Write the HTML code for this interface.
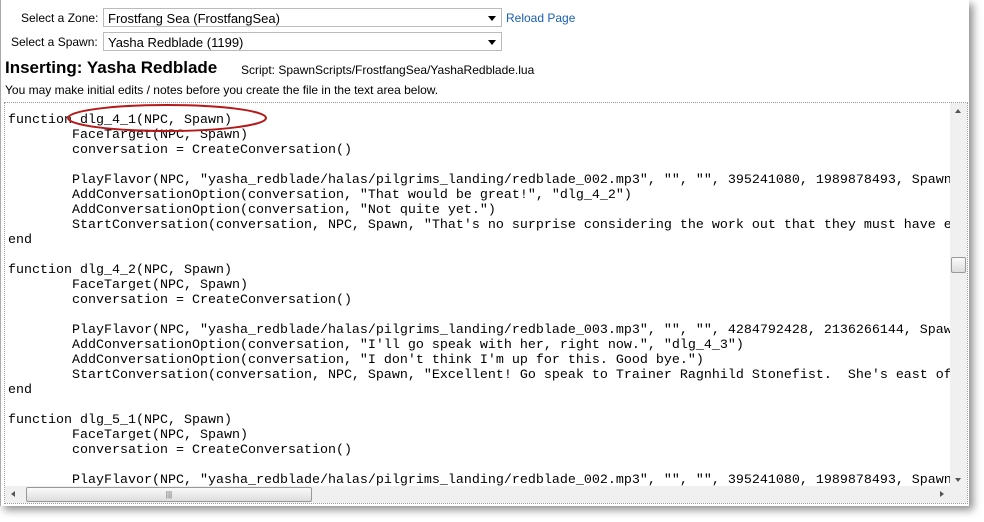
<!DOCTYPE html>
<html><head><meta charset="utf-8"><style>
body{margin:0;width:984px;height:522px;background:#fff;position:relative;overflow:hidden;font-family:"Liberation Sans",sans-serif;}
#page{position:absolute;left:0;top:0;width:968px;height:506px;background:#fff;border-left:1px solid #aaa;box-shadow:4px 4px 8px rgba(0,0,0,.45);}
.lbl{position:absolute;font-size:12px;color:#000;}
.sel{position:absolute;height:19px;border:1px solid #bbb;background:#fff;font-size:13px;line-height:19px;padding-left:4px;box-sizing:border-box;}
.sel:after{content:"";position:absolute;right:5px;top:7px;border-left:4px solid transparent;border-right:4px solid transparent;border-top:5px solid #000;}
#ta{position:absolute;left:3px;top:102px;width:964px;height:402px;border:1px dotted #999;box-sizing:border-box;overflow:hidden;}
pre{margin:0;position:absolute;left:3px;top:10px;font-family:"Liberation Mono",monospace;font-size:13.33px;line-height:15px;color:#000;tab-size:8;white-space:pre;}
.vs{position:absolute;right:0;top:0;width:17px;height:384px;background:#f0f0f0;}
.hs{position:absolute;left:0;bottom:0;height:17px;width:945px;background:#f0f0f0;}
.corner{position:absolute;right:0;bottom:0;width:17px;height:17px;background:#f0f0f0;}
</style></head><body>
<div id="page">
<div class="lbl" style="left:20px;top:11px">Select a Zone:</div>
<div class="sel" style="left:102px;top:8px;width:399px">Frostfang Sea (FrostfangSea)</div>
<div class="lbl" style="left:505px;top:11px;color:#1a5fb4">Reload Page</div>
<div class="lbl" style="left:10px;top:35px">Select a Spawn:</div>
<div class="sel" style="left:102px;top:32px;width:399px">Yasha Redblade (1199)</div>
<div style="position:absolute;left:4px;top:58px;font-size:17px;font-weight:bold">Inserting: Yasha Redblade</div>
<div class="lbl" style="left:240px;top:63px">Script: SpawnScripts/FrostfangSea/YashaRedblade.lua</div>
<div class="lbl" style="left:4px;top:83px">You may make initial edits / notes before you create the file in the text area below.</div>
<div id="ta">
<pre>function dlg_4_1(NPC, Spawn)
	FaceTarget(NPC, Spawn)
	conversation = CreateConversation()

	PlayFlavor(NPC, "yasha_redblade/halas/pilgrims_landing/redblade_002.mp3", "", "", 395241080, 1989878493, Spawn)
	AddConversationOption(conversation, "That would be great!", "dlg_4_2")
	AddConversationOption(conversation, "Not quite yet.")
	StartConversation(conversation, NPC, Spawn, "That's no surprise considering the work out that they must have e
end

function dlg_4_2(NPC, Spawn)
	FaceTarget(NPC, Spawn)
	conversation = CreateConversation()

	PlayFlavor(NPC, "yasha_redblade/halas/pilgrims_landing/redblade_003.mp3", "", "", 4284792428, 2136266144, Spawn)
	AddConversationOption(conversation, "I'll go speak with her, right now.", "dlg_4_3")
	AddConversationOption(conversation, "I don't think I'm up for this. Good bye.")
	StartConversation(conversation, NPC, Spawn, "Excellent! Go speak to Trainer Ragnhild Stonefist.  She's east of
end

function dlg_5_1(NPC, Spawn)
	FaceTarget(NPC, Spawn)
	conversation = CreateConversation()

	PlayFlavor(NPC, "yasha_redblade/halas/pilgrims_landing/redblade_002.mp3", "", "", 395241080, 1989878493, Spawn)</pre>
<div class="vs">
 <div style="position:absolute;left:5px;top:6px;border-left:3px solid transparent;border-right:3px solid transparent;border-bottom:4px solid #555"></div>
 <div style="position:absolute;left:1px;top:154px;width:13px;height:14px;border:1px solid #999;border-radius:2px;background:linear-gradient(#fafafa,#ddd)"></div>
 <div style="position:absolute;left:5px;bottom:5px;border-left:3px solid transparent;border-right:3px solid transparent;border-top:4px solid #555"></div>
</div>
<div class="hs">
 <div style="position:absolute;left:6px;top:5px;border-top:3px solid transparent;border-bottom:3px solid transparent;border-right:4px solid #555"></div>
 <div style="position:absolute;left:21px;top:1px;width:284px;height:13px;border:1px solid #999;border-radius:2px;background:linear-gradient(#fafafa,#ddd);font-size:8px;text-align:center;line-height:13px;color:#555">|||</div>
 <div style="position:absolute;right:6px;top:5px;border-top:3px solid transparent;border-bottom:3px solid transparent;border-left:4px solid #555"></div>
</div>
<div class="corner"></div>
</div>
<svg style="position:absolute;left:0;top:0" width="968" height="506"><ellipse cx="166" cy="118" rx="99" ry="13" fill="none" stroke="#b51a1a" stroke-width="2"/></svg>
</div>
</body></html>
